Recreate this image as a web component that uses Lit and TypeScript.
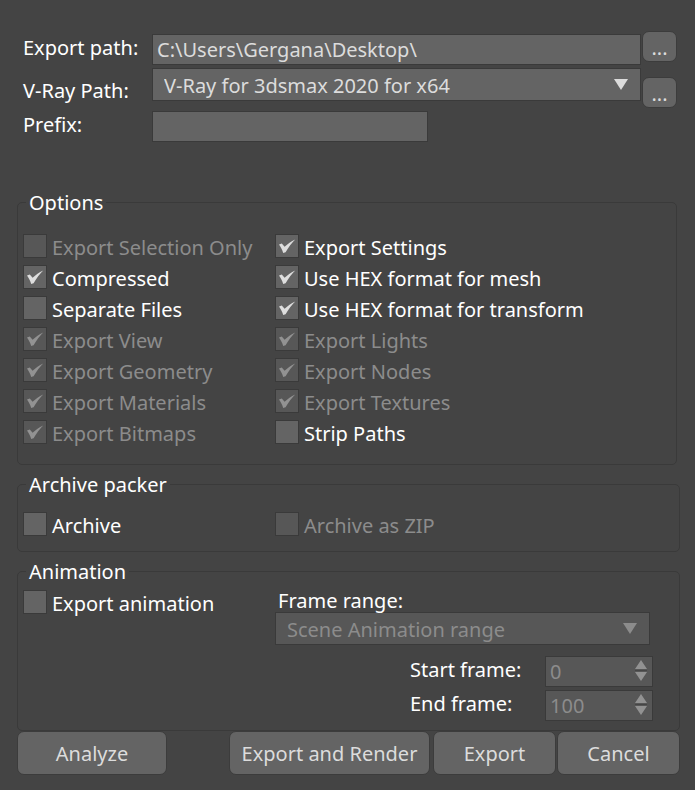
import { LitElement, html, css } from "lit";
import { customElement, property } from "lit/decorators.js";

const FONT = css`"Noto Sans", "Open Sans", sans-serif`;

interface Option {
  label: string;
  checked?: boolean;
  disabled?: boolean;
}

const OPTIONS: Option[] = [
  { label: "Export Selection Only", disabled: true },
  { label: "Compressed", checked: true },
  { label: "Separate Files" },
  { label: "Export View", checked: true, disabled: true },
  { label: "Export Geometry", checked: true, disabled: true },
  { label: "Export Materials", checked: true, disabled: true },
  { label: "Export Bitmaps", checked: true, disabled: true },
  { label: "Export Settings", checked: true },
  { label: "Use HEX format for mesh", checked: true },
  { label: "Use HEX format for transform", checked: true },
  { label: "Export Lights", checked: true, disabled: true },
  { label: "Export Nodes", checked: true, disabled: true },
  { label: "Export Textures", checked: true, disabled: true },
  { label: "Strip Paths" },
];

@customElement("check-option")
class CheckOption extends LitElement {
  @property() label = "";
  @property({ type: Boolean }) checked = false;
  @property({ type: Boolean }) disabled = false;

  static styles = css`
    :host {
      display: block;
    }
    .option {
      display: inline-flex;
      align-items: center;
      gap: 5px;
      height: 24px;
      color: #fff;
      white-space: nowrap;
    }
    .off {
      color: #8c8c8c;
    }
    .text {
      padding-top: 3px;
    }
    .tick {
      display: grid;
    }
    .box,
    .mark {
      grid-area: 1 / 1;
      width: 24px;
      height: 24px;
    }
    .box {
      appearance: none;
      box-sizing: border-box;
      margin: 0;
      border: 1px solid #3a3a3a;
      background: #646464;
    }
    .off .box {
      background: #575757;
    }
    .mark {
      visibility: hidden;
      pointer-events: none;
      fill: #dedede;
    }
    .off .mark {
      fill: #929292;
    }
    .box:checked + .mark {
      visibility: visible;
    }
  `;

  render() {
    return html`<label class="option ${this.disabled ? "off" : ""}">
      <span class="tick">
        <input class="box" type="checkbox" .checked=${this.checked} ?disabled=${this.disabled} />
        <svg class="mark" viewBox="0 0 24 24" aria-hidden="true">
          <path d="M4 10.6 L6.8 9.6 L9.6 12.8 C12.8 9.6 16 7.4 20.2 5.4 C16.8 8.8 13.4 13.4 10.6 18.2 L8.2 19 C7.2 15.8 5.8 13.2 4 10.6 Z" />
        </svg>
      </span>
      <span class="text">${this.label}</span>
    </label>`;
  }
}

@customElement("app-root")
class AppRoot extends LitElement {
  static styles = css`
    :host {
      display: block;
      box-sizing: border-box;
      min-height: 100vh;
      padding: 31px 15px 15px 17px;
      background: #444;
      color: #fff;
      font: 20px/28px ${FONT};
    }
    .paths {
      display: grid;
      grid-template-columns: 129px 1fr 36px;
      grid-template-rows: 34px 40px 31px;
      row-gap: 3px;
      margin: 0 3px 0 6px;
    }
    .name {
      align-self: center;
      white-space: nowrap;
    }
    .name.low {
      padding-top: 6px;
    }
    .name.high {
      align-self: start;
    }
    .field {
      box-sizing: border-box;
      width: 100%;
      min-width: 0;
      height: 31px;
      margin: 0;
      padding: 0 4px;
      border: 1px solid #3a3a3a;
      border-radius: 0;
      background: #646464;
      color: #dcdcdc;
      font: inherit;
    }
    .field:disabled {
      background: #575757;
      color: #8c8c8c;
      opacity: 1;
    }
    .end {
      align-self: end;
    }
    .short {
      width: 276px;
    }
    .pick {
      position: relative;
    }
    .pick .field {
      appearance: none;
      display: block;
      height: 33px;
      padding: 2px 36px 0 11px;
    }
    .arrow {
      position: absolute;
      right: 13px;
      top: 11px;
      width: 14px;
      height: 11px;
      fill: #dcdcdc;
      pointer-events: none;
    }
    .arrow.off {
      fill: #8c8c8c;
    }
    .button {
      box-sizing: border-box;
      height: 44px;
      margin: 0;
      padding: 2px 10px 0;
      border: 1px solid #3c3c3c;
      border-radius: 7px;
      background: #646464;
      color: #dcdcdc;
      font: inherit;
      white-space: nowrap;
    }
    .browse {
      height: 31px;
      margin-left: 1px;
      padding: 2px 0 0;
    }
    .group {
      min-width: 0;
      margin: 4px 0 0;
      padding: 0 5px;
      border: 1px solid #3a3a3a;
      border-radius: 5px;
    }
    .title {
      margin-left: 3px;
      padding: 2px 3px 0;
    }
    .options {
      margin: 45px 3px 0 0;
    }
    .two {
      display: grid;
      grid-template-columns: 252px 1fr;
    }
    .options .two {
      grid-template-rows: repeat(7, 24px);
      grid-auto-flow: column;
      row-gap: 7px;
      padding: 17px 0 20px;
    }
    .archive .two {
      height: 24px;
      padding: 13px 0 15px;
    }
    .animation .two {
      padding: 4px 0 9px;
    }
    .range {
      padding-right: 24px;
    }
    .caption {
      display: block;
      position: relative;
      z-index: 1;
      padding-left: 3px;
      line-height: 22px;
    }
    .frames {
      display: grid;
      grid-template-columns: 135px 108px;
      justify-content: end;
      row-gap: 3px;
      margin: 11px -3px 0 0;
    }
    .spin {
      position: relative;
    }
    .spin .field {
      display: block;
      appearance: textfield;
    }
    .steps {
      position: absolute;
      right: 6px;
      top: 4px;
      width: 12px;
      height: 22px;
      fill: #929292;
      pointer-events: none;
    }
    .split {
      fill: #464646;
    }
    .actions {
      display: flex;
      gap: 1px;
    }
    .analyze {
      width: 150px;
      margin-right: auto;
    }
    .render {
      width: 201px;
      margin-right: 2px;
    }
    .small {
      width: 123px;
    }
  `;

  private option(o: Option) {
    return html`<check-option
      .label=${o.label}
      ?checked=${o.checked}
      ?disabled=${o.disabled}
    ></check-option>`;
  }

  private arrow(off = false) {
    return html`<svg class="arrow ${off ? "off" : ""}" viewBox="0 0 14 11" aria-hidden="true">
      <path d="M0 0 H14 L7 11 Z" />
    </svg>`;
  }

  private frame(id: string, label: string, value: number) {
    return html`<label class="name high" for=${id}>${label}</label>
      <span class="spin">
        <input class="field" id=${id} type="number" .value=${String(value)} disabled />
        <svg class="steps" viewBox="0 0 12 22" aria-hidden="true">
          <path d="M6 0 L12 9 H0 Z M0 12 H12 L6 21 Z" />
          <path class="split" d="M0 10 H12 V11 H0 Z" />
        </svg>
      </span>`;
  }

  render() {
    return html`
      <div class="paths">
        <label class="name" for="export-path">Export path:</label>
        <input class="field end" id="export-path" type="text" value="C:\\Users\\Gergana\\Desktop\\" />
        <button class="button browse" aria-label="Browse export path">...</button>

        <label class="name low" for="vray-path">V-Ray Path:</label>
        <span class="pick">
          <select class="field" id="vray-path">
            <option>V-Ray for 3dsmax 2020 for x64</option>
          </select>
          ${this.arrow()}
        </span>
        <button class="button browse end" aria-label="Browse V-Ray path">...</button>

        <label class="name high" for="prefix">Prefix:</label>
        <input class="field short" id="prefix" type="text" />
      </div>

      <fieldset class="group options">
        <legend class="title">Options</legend>
        <div class="two">${OPTIONS.map((o) => this.option(o))}</div>
      </fieldset>

      <fieldset class="group archive">
        <legend class="title">Archive packer</legend>
        <div class="two">
          ${this.option({ label: "Archive" })}
          ${this.option({ label: "Archive as ZIP", disabled: true })}
        </div>
      </fieldset>

      <fieldset class="group animation">
        <legend class="title">Animation</legend>
        <div class="two">
          ${this.option({ label: "Export animation" })}
          <div class="range">
            <label class="caption" for="frame-range">Frame range:</label>
            <span class="pick">
              <select class="field" id="frame-range" disabled>
                <option>Scene Animation range</option>
              </select>
              ${this.arrow(true)}
            </span>
            <div class="frames">
              ${this.frame("start-frame", "Start frame:", 0)}
              ${this.frame("end-frame", "End frame:", 100)}
            </div>
          </div>
        </div>
      </fieldset>

      <div class="actions">
        <button class="button analyze">Analyze</button>
        <button class="button render">Export and Render</button>
        <button class="button small">Export</button>
        <button class="button small">Cancel</button>
      </div>
    `;
  }
}
